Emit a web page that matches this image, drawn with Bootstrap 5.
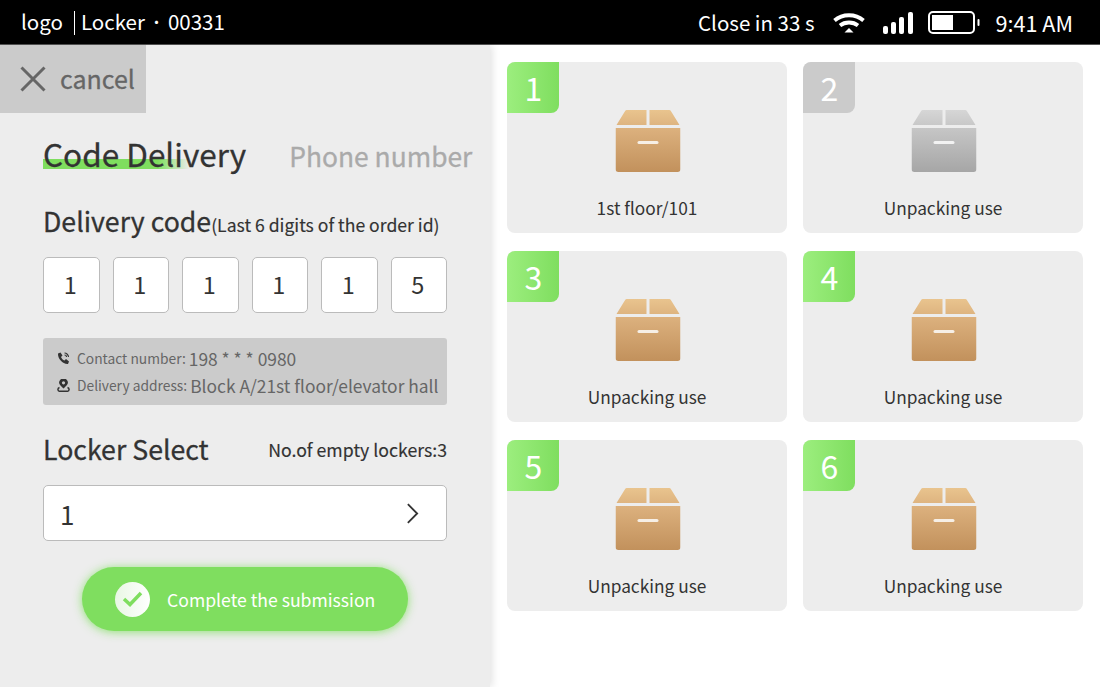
<!DOCTYPE html>
<html lang="en">
<head>
    <meta charset="UTF-8">
    <meta name="viewport" content="width=device-width, initial-scale=1.0">
    <title>Locker</title>
    <link href="https://cdn.jsdelivr.net/npm/bootstrap@5.3.0/dist/css/bootstrap.min.css" rel="stylesheet">
    <style>
        html, body { height: 100%; }
        body { font-family: "Noto Sans CJK SC", "Noto Sans", sans-serif; background: #fff; color: #333; overflow: hidden; }
        .status-bar { height: 45px; background: #000; border-bottom: 1px solid #555; color: #fff; font-size: 20.5px; line-height: 1; padding: 1px 27px 0 21px; }
        .brand-sep { display: inline-block; width: 1px; height: 24px; background: #fff; margin: 0 6px 0 11px; vertical-align: -5px; }
        .brand-dot { font-size: 15px; margin: 0 4px; vertical-align: 2px; }
        .status-time { font-size: 21.600px; }
        .wifi-icon { margin-left: 17px; }
        .signal-icon { margin-left: 17px; }
        .battery-icon { margin-left: 14px; }
        .screen { height: 642px; }
        .left-panel { width: 490px; background: #ededed; box-shadow: 2px 0 8px rgba(0,0,0,.12); position: relative; flex: none; }
        .cancel-btn { width: 146px; height: 68px; background: #cbcbcb; color: #666; font-size: 25px; padding-left: 20px; gap: 14px; -webkit-text-stroke: .3px #666; }
        .panel-body { padding: 16px 43px 0; }
        .tab-row { height: 47px; }
        .tab-active { font-size: 31.500px; line-height: 46px; color: #333; position: relative; white-space: nowrap; flex: none; -webkit-text-stroke: .3px #333; }
        .tab-active::before { content: ""; position: absolute; left: 0; top: 29px; width: 147px; height: 10px; background: linear-gradient(90deg, #7fde5f 78%, rgba(127,222,95,0)); }
        .tab-active span { position: relative; }
        .tab-other { font-size: 26.400px; color: #aaa; margin: 6px 0 0 43px; white-space: nowrap; flex: none; -webkit-text-stroke: .3px #aaa; }
        .section-title { font-size: 26.700px; line-height: 38px; color: #333; -webkit-text-stroke: .3px #333; }
        .section-title small { font-size: 17.600px; -webkit-text-stroke: .15px #333; }
        .title-first { margin-top: 26px; }
        .digit-row { margin-top: 13px; }
        .digit-box { width: 56.500px; height: 56px; background: #fff; border: 1px solid #bbb; border-radius: 5px; font-size: 23.500px; color: #333; padding-right: 2px; }
        .info-box { margin-top: 25px; height: 67px; background: #cbcbcb; border-radius: 3px; padding: 7px 0 0 14px; color: #666; font-size: 13.800px; white-space: nowrap; }
        .info-line { height: 27px; line-height: 27px; }
        .info-line svg { flex: none; margin-right: 7px; }
        .info-val { font-size: 17.400px; margin-left: 3px; }
        .locker-head { margin-top: 25px; }
        .empty-count { font-size: 17.700px; color: #333; -webkit-text-stroke: .15px #333; }
        .select-box { margin-top: 17px; height: 56px; background: #fff; border: 1px solid #bbb; border-radius: 5px; font-size: 26px; padding: 0 27px 0 16px; }
        .submit-btn { width: 326px; height: 64px; margin: 26px 0 0 82px; background: #7fde5f; border-radius: 32px; color: #fff; font-size: 17.600px; padding-left: 33px; gap: 17px; box-shadow: 0 1px 10px rgba(127,222,95,.85); }
        .submit-btn span { padding-top: 2px; }
        .check-dot { width: 35px; height: 35px; border-radius: 50%; background: linear-gradient(90deg, #e9f7e4, #fff); flex: none; }
        .locker-grid { padding: 17px 17px 0; display: grid; grid-template-columns: 280px 280px; grid-auto-rows: 171px; column-gap: 16px; row-gap: 18px; }
        .locker-tile { background: #ededed; border-radius: 8px; position: relative; padding-top: 48px; font-size: 17.300px; color: #333; }
        .locker-tile > svg { transform: translateX(.5px); }
        .locker-num { position: absolute; left: 0; top: 0; width: 52px; height: 51px; padding-left: 1px; border-radius: 8px 0 8px 0; background: linear-gradient(90deg, #9cee7e, #7fde5f); color: #fff; font-size: 32px; line-height: 51px; text-align: center; }
        .locker-num.off { background: #cbcbcb; }
        .tile-label { margin-top: 24px; line-height: 24px; }
    </style>
</head>
<body>
    <svg width="0" height="0" class="position-absolute">
        <defs>
            <linearGradient id="lidTan" x1="0" y1="0" x2="0" y2="1"><stop offset="0" stop-color="#e9c48e"/><stop offset="1" stop-color="#deb480"/></linearGradient>
            <linearGradient id="bodyTan" x1="0" y1="0" x2="0" y2="1"><stop offset="0" stop-color="#dcb17e"/><stop offset="1" stop-color="#c2915c"/></linearGradient>
            <linearGradient id="lidGrey" x1="0" y1="0" x2="0" y2="1"><stop offset="0" stop-color="#d6d6d6"/><stop offset="1" stop-color="#c8c8c8"/></linearGradient>
            <linearGradient id="bodyGrey" x1="0" y1="0" x2="0" y2="1"><stop offset="0" stop-color="#c6c6c6"/><stop offset="1" stop-color="#a6a6a6"/></linearGradient>
            <symbol id="boxTan" viewBox="0 0 65 62">
                <path d="M11 0H31V15H1L9 2Q10 0 11 0ZM34 0H54Q55 0 56 2L64 15H34Z" fill="url(#lidTan)"/>
                <path d="M0 18H65V59Q65 62 62 62H3Q0 62 0 59Z" fill="url(#bodyTan)"/>
                <rect x="22" y="31" width="21" height="3" rx="1.5" fill="#f6efe6"/>
            </symbol>
            <symbol id="boxGrey" viewBox="0 0 65 62">
                <path d="M11 0H31V15H1L9 2Q10 0 11 0ZM34 0H54Q55 0 56 2L64 15H34Z" fill="url(#lidGrey)"/>
                <path d="M0 18H65V59Q65 62 62 62H3Q0 62 0 59Z" fill="url(#bodyGrey)"/>
                <rect x="22" y="31" width="21" height="3" rx="1.5" fill="#f2f2f2"/>
            </symbol>
        </defs>
    </svg>

    <div class="status-bar d-flex align-items-center justify-content-between">
        <div class="text-nowrap">logo<span class="brand-sep"></span>Locker<span class="brand-dot">•</span>00331</div>
        <div class="d-flex align-items-center">
            <span>Close in 33 s</span>
            <svg class="wifi-icon" width="34" height="22" viewBox="0 0 33 22" fill="none" stroke="#fff" stroke-width="3.800">
                <path d="M2 8.500C10 1.500 23 1.500 31 8.500"/>
                <path d="M7.500 13.500C12.500 9.500 20.500 9.500 25.500 13.500"/>
                <path d="M12 20.500L16.500 16 21 20.500Z" fill="#fff" stroke="none"/>
            </svg>
            <svg class="signal-icon" width="31" height="22" viewBox="0 0 31 22" fill="#fff">
                <rect x="0" y="14" width="5" height="8" rx="2"/>
                <rect x="8" y="10" width="5" height="12" rx="2"/>
                <rect x="16" y="5" width="5" height="17" rx="2"/>
                <rect x="25" y="0" width="5" height="22" rx="2"/>
            </svg>
            <svg class="battery-icon" width="52" height="23" viewBox="0 0 52 23" fill="none">
                <rect x="1" y="1" width="45" height="21" rx="4" stroke="#fff" stroke-width="2"/>
                <rect x="4" y="4" width="21" height="15" fill="#fff"/>
                <rect x="49.500" y="8" width="2" height="7" rx="1" fill="#fff"/>
            </svg>
            <span class="status-time ms-3">9:41 AM</span>
        </div>
    </div>

    <div class="screen d-flex">
        <div class="left-panel">
            <div class="cancel-btn d-flex align-items-center">
                <svg width="26" height="26" viewBox="0 0 26 26" stroke="#666" stroke-width="3" fill="none"><path d="M1.500 1.500L24.500 24.500M24.500 1.500L1.500 24.500"/></svg>
                <span>cancel</span>
            </div>
            <div class="panel-body">
                <div class="tab-row d-flex align-items-center">
                    <div class="tab-active"><span>Code Delivery</span></div>
                    <div class="tab-other">Phone number</div>
                </div>
                <div class="section-title title-first text-nowrap">Delivery code<small>(Last 6 digits of the order id)</small></div>
                <div class="digit-row d-flex justify-content-between">
                    <div class="digit-box d-flex align-items-center justify-content-center">1</div>
                    <div class="digit-box d-flex align-items-center justify-content-center">1</div>
                    <div class="digit-box d-flex align-items-center justify-content-center">1</div>
                    <div class="digit-box d-flex align-items-center justify-content-center">1</div>
                    <div class="digit-box d-flex align-items-center justify-content-center">1</div>
                    <div class="digit-box d-flex align-items-center justify-content-center">5</div>
                </div>
                <div class="info-box">
                    <div class="info-line d-flex align-items-center">
                        <svg width="13" height="13" viewBox="0 0 13 13" fill="#333"><path d="M1 1.500L3.500 .5 5.500 3.500 4 5C4.500 6.500 6 8 7.500 8.500L9 7 12 9.500 11 12C6 12.500 .5 6.500 1 1.500Z"/><path d="M7.500 1C9.500 1 11.500 3 11.500 5M7.500 3C8.500 3 9.500 4 9.500 5" fill="none" stroke="#333" stroke-width="1.100"/></svg>
                        <span>Contact number:</span><span class="info-val">198 * * * 0980</span>
                    </div>
                    <div class="info-line d-flex align-items-center">
                        <svg width="13" height="13" viewBox="0 0 13 13" fill="none" stroke="#333"><path d="M6.500 9.500L3.500 6.500A4.200 4.200 0 1 1 9.500 6.500Z" fill="#333" stroke="none"/><circle cx="6.500" cy="3.800" r="1.600" fill="#cbcbcb" stroke="none"/><path d="M2.500 8.500C.2 9.500 .5 12.300 3 12.300H10C12.500 12.300 12.800 9.500 10.500 8.500" stroke-width="1.500"/></svg>
                        <span>Delivery address:</span><span class="info-val">Block A/21st floor/elevator hall</span>
                    </div>
                </div>
                <div class="locker-head d-flex align-items-center justify-content-between">
                    <div class="section-title">Locker Select</div>
                    <div class="empty-count">No.of empty lockers:3</div>
                </div>
                <div class="select-box d-flex align-items-center justify-content-between">
                    <span>1</span>
                    <svg width="13" height="23" viewBox="0 0 14 24" fill="none" stroke="#333" stroke-width="2"><path d="M2 2L12 12 2 22"/></svg>
                </div>
            </div>
            <div class="submit-btn d-flex align-items-center">
                <div class="check-dot d-flex align-items-center justify-content-center">
                    <svg width="21" height="16" viewBox="0 0 21 16" fill="none" stroke="#7fde5f" stroke-width="3.500"><path d="M2 8L8 13.500 19 2"/></svg>
                </div>
                <span>Complete the submission</span>
            </div>
        </div>

        <div class="locker-grid flex-grow-1">
            <div class="locker-tile text-center">
                <div class="locker-num">1</div>
                <svg class="d-block mx-auto" width="65" height="62"><use href="#boxTan"/></svg>
                <div class="tile-label">1st floor/101</div>
            </div>
            <div class="locker-tile text-center">
                <div class="locker-num off">2</div>
                <svg class="d-block mx-auto" width="65" height="62"><use href="#boxGrey"/></svg>
                <div class="tile-label">Unpacking use</div>
            </div>
            <div class="locker-tile text-center">
                <div class="locker-num">3</div>
                <svg class="d-block mx-auto" width="65" height="62"><use href="#boxTan"/></svg>
                <div class="tile-label">Unpacking use</div>
            </div>
            <div class="locker-tile text-center">
                <div class="locker-num">4</div>
                <svg class="d-block mx-auto" width="65" height="62"><use href="#boxTan"/></svg>
                <div class="tile-label">Unpacking use</div>
            </div>
            <div class="locker-tile text-center">
                <div class="locker-num">5</div>
                <svg class="d-block mx-auto" width="65" height="62"><use href="#boxTan"/></svg>
                <div class="tile-label">Unpacking use</div>
            </div>
            <div class="locker-tile text-center">
                <div class="locker-num">6</div>
                <svg class="d-block mx-auto" width="65" height="62"><use href="#boxTan"/></svg>
                <div class="tile-label">Unpacking use</div>
            </div>
        </div>
    </div>

    <script src="https://cdn.jsdelivr.net/npm/bootstrap@5.3.0/dist/js/bootstrap.bundle.min.js"></script>
</body>
</html>
